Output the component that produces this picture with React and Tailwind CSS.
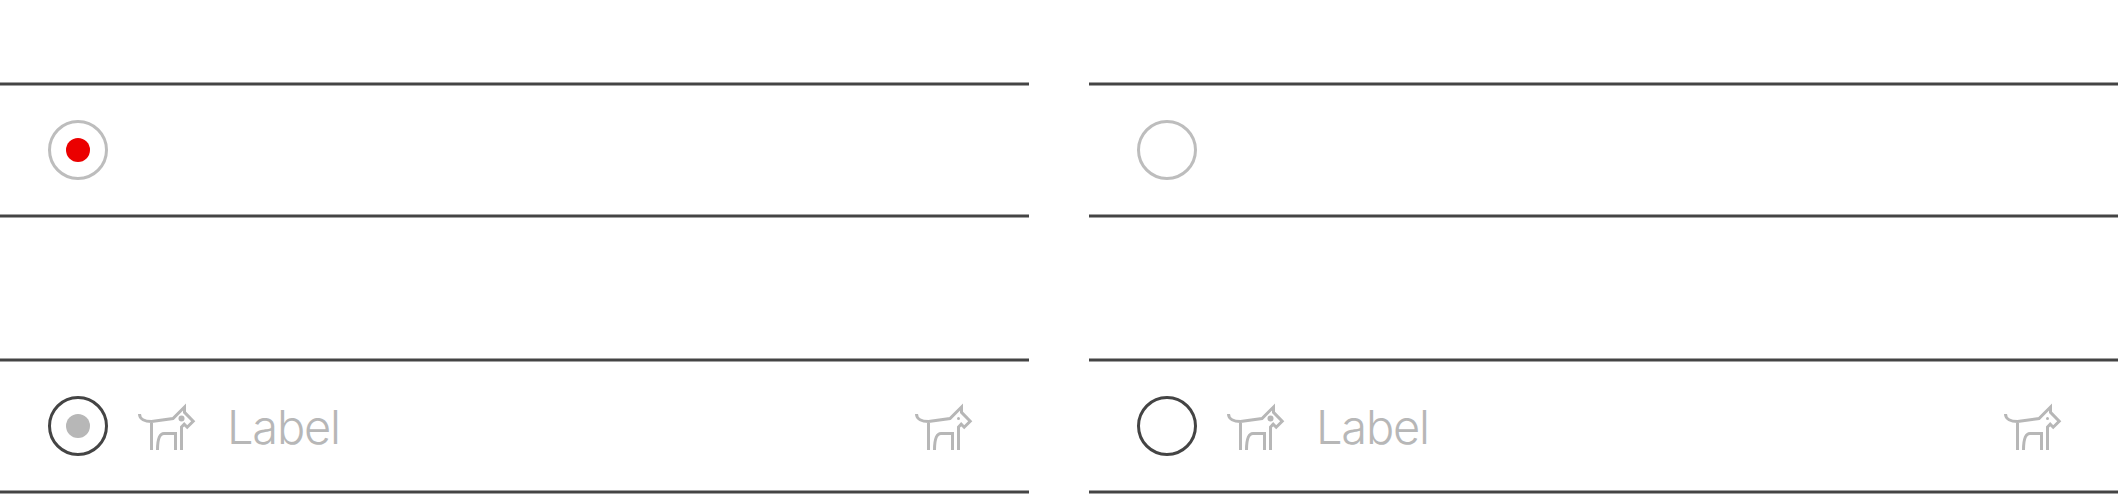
function Rule() {
  return <div className="h-1 w-full shrink-0 border-y border-[#a1a1a1] bg-[#444444]" />;
}

function Dog({ eye }) {
  return (
    <svg className="size-18 shrink-0" viewBox="0 0 72 72" fill="none" stroke="#b7b7b7" strokeWidth="3" aria-hidden="true">
      <path d="M7.5 24C7.5 29 13 31.5 19.5 31.5L41 28.5L52.5 17V22.4L61.2 31.2L55.2 37.2L52.2 34.2L49.5 37V60M19.5 31.5V60M25.5 60C25.5 50 27 43.5 32 43.5H43.5V60" strokeMiterlimit="10" />
      <circle cx="49.5" cy="28.5" r={eye} fill="#b7b7b7" stroke="none" />
    </svg>
  );
}

function Radio({ muted, dot }) {
  return (
    <span className={`flex size-15 shrink-0 items-center justify-center rounded-full border-3 ${muted ? "border-[#bdbdbd]" : "border-[#444444]"}`}>
      {dot && <span className={`size-6 rounded-full ${dot}`} />}
    </span>
  );
}

function Row({ children }) {
  return (
    <div className="flex h-[136px] flex-col">
      <Rule />
      <div className="flex flex-1 items-center gap-6 px-12">{children}</div>
      <Rule />
    </div>
  );
}

function Column({ checked }) {
  return (
    <div className="flex flex-col gap-[140px] pt-[82px]">
      <Row>
        <Radio muted dot={checked && "bg-[#eb0000]"} />
      </Row>
      <Row>
        <Radio dot={checked && "bg-[#b7b7b7]"} />
        <Dog eye={3} />
        <span className="-ml-px flex-1 pt-0.5 font-['Inter','Liberation_Sans',sans-serif] text-[47px] leading-[72px] font-light tracking-[-1.2px] text-[#b7b7b7]">
          Label
        </span>
        <Dog eye={1.5} />
      </Row>
    </div>
  );
}

export default function App() {
  return (
    <main className="grid h-[494px] w-[2118px] grid-cols-2 gap-15 overflow-hidden bg-white">
      <Column checked />
      <Column />
    </main>
  );
}
